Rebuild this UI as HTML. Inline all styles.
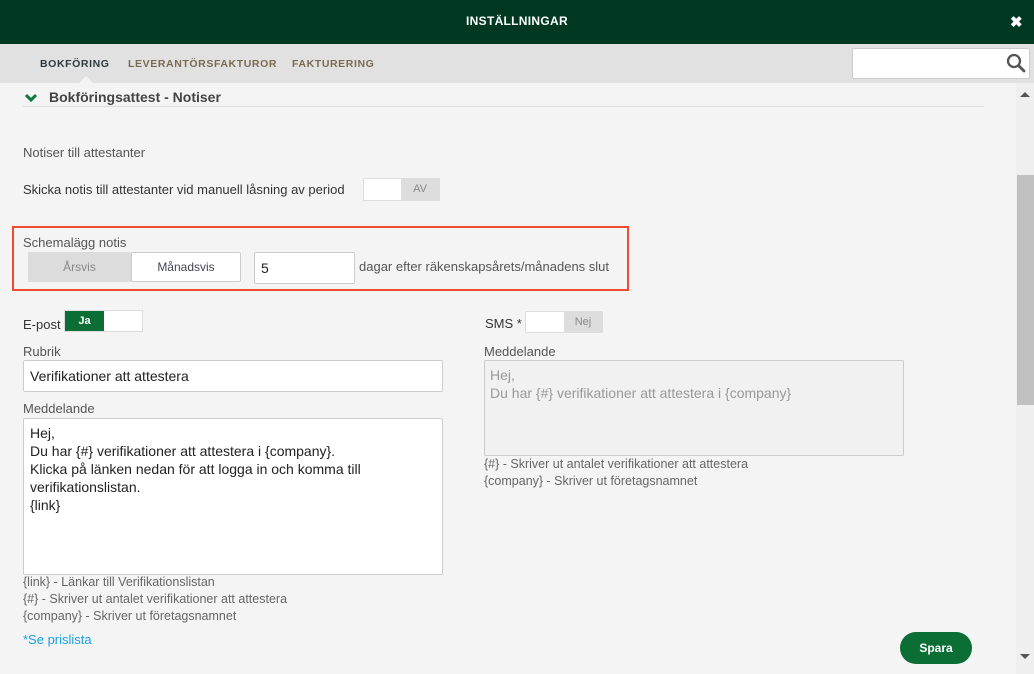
<!DOCTYPE html>
<html><head><meta charset="utf-8"><style>
*{box-sizing:border-box;margin:0;padding:0}
body{width:1034px;height:674px;overflow:hidden;background:#f4f4f4;font-family:"Liberation Sans",sans-serif;color:#333;position:relative;font-size:13px}
.a{position:absolute;white-space:nowrap}
.lbl{color:#555;font-size:13px}
.inp{position:absolute;background:#fff;border:1px solid #ccc;border-radius:2px}
.hint{color:#666;font-size:12.5px;line-height:17px}
</style></head><body>
<div class="a" style="left:0;top:0;width:1034px;height:44px;background:#003822"></div>
<div class="a" style="left:0;top:14px;width:1034px;text-align:center;color:#fff;font-weight:bold;font-size:12px;letter-spacing:.3px">INSTÄLLNINGAR</div>
<div class="a" style="left:1010px;top:13px;color:#fff;font-weight:bold;font-size:15px">✖</div>
<div class="a" style="left:0;top:44px;width:1034px;height:39px;background:#e1e1e1"></div>
<div class="a" style="left:40px;top:58px;font-size:10.5px;font-weight:bold;color:#2c3a40;letter-spacing:.6px">BOKFÖRING</div>
<div class="a" style="left:128px;top:58px;font-size:10.5px;font-weight:bold;color:#7a6a50;letter-spacing:.6px">LEVERANTÖRSFAKTUROR</div>
<div class="a" style="left:292px;top:58px;font-size:10.5px;font-weight:bold;color:#7a6a50;letter-spacing:.6px">FAKTURERING</div>
<div class="a" style="left:79px;top:76px;width:0;height:0;border-left:7px solid transparent;border-right:7px solid transparent;border-bottom:7px solid #f4f4f4"></div>
<div class="inp" style="left:852px;top:48px;width:178px;height:31px;border-radius:2px"></div>
<svg class="a" style="left:1006px;top:53px" width="20" height="20" viewBox="0 0 20 20"><circle cx="8" cy="8" r="6" fill="none" stroke="#555" stroke-width="2.3"/><line x1="12.5" y1="12.5" x2="18" y2="18" stroke="#555" stroke-width="2.8" stroke-linecap="round"/></svg>
<div class="a" style="left:1016px;top:83px;width:18px;height:591px;background:#efefef"></div>
<div class="a" style="left:1017px;top:175px;width:17px;height:230px;background:#c1c1c1"></div>
<div class="a" style="left:1020px;top:92px;border-left:5px solid transparent;border-right:5px solid transparent;border-bottom:5px solid #555"></div>
<div class="a" style="left:1020px;top:654px;border-left:5px solid transparent;border-right:5px solid transparent;border-top:5px solid #555"></div>
<svg class="a" style="left:24px;top:92px" width="14" height="12" viewBox="0 0 14 12"><path d="M2 3 L7 8 L12 3" fill="none" stroke="#0a7a3a" stroke-width="3"/></svg>
<div class="a" style="left:49px;top:89px;font-size:14px;font-weight:bold;color:#444">Bokföringsattest - Notiser</div>
<div class="a" style="left:23px;top:106px;width:961px;height:1px;background:#ddd"></div>
<div class="a lbl" style="left:23px;top:145px">Notiser till attestanter</div>
<div class="a" style="left:23px;top:182px;color:#333">Skicka notis till attestanter vid manuell låsning av period</div>
<div class="a" style="left:363px;top:178px;width:77px;height:23px;background:#ddd;border:1px solid #ddd"><div style="position:absolute;left:0;top:0;width:37px;height:21px;background:#fff"></div><div style="position:absolute;left:37px;top:4px;width:38px;text-align:center;font-size:11px;color:#888">AV</div></div>
<div class="a" style="left:12px;top:226px;width:617px;height:65px;border:2px solid #f04a30"></div>
<div class="a lbl" style="left:23px;top:235px">Schemalägg notis</div>
<div class="a" style="left:28px;top:252px;width:103px;height:30px;background:#dcdcdc;text-align:center;line-height:30px;font-size:12px;color:#888">Årsvis</div>
<div class="inp" style="left:131px;top:252px;width:110px;height:30px;text-align:center;line-height:28px;font-size:12px;color:#445">Månadsvis</div>
<div class="inp" style="left:254px;top:252px;width:101px;height:32px;line-height:30px;padding-left:6px;font-size:14px;color:#222">5</div>
<div class="a" style="left:359px;top:259px;color:#555">dagar efter räkenskapsårets/månadens slut</div>
<div class="a" style="left:23px;top:317px;color:#333">E-post</div>
<div class="a" style="left:64px;top:310px;width:79px;height:22px;background:#fff;border:1px solid #ddd"><div style="position:absolute;left:0;top:0;width:39px;height:20px;background:#0a6e35;color:#fff;font-weight:bold;font-size:11px;text-align:center;line-height:20px">Ja</div></div>
<div class="a" style="left:485px;top:316px;color:#333">SMS *</div>
<div class="a" style="left:525px;top:311px;width:78px;height:22px;background:#ddd;border:1px solid #ddd"><div style="position:absolute;left:0;top:0;width:38px;height:20px;background:#fff"></div><div style="position:absolute;left:38px;top:4px;width:38px;text-align:center;font-size:11px;color:#888">Nej</div></div>
<div class="a lbl" style="left:23px;top:344px">Rubrik</div>
<div class="inp" style="left:23px;top:360px;width:420px;height:32px;line-height:30px;padding-left:6px;font-size:14px;color:#222">Verifikationer att attestera</div>
<div class="a lbl" style="left:23px;top:401px">Meddelande</div>
<div class="inp" style="left:23px;top:418px;width:420px;height:157px;padding:5px 6px;font-size:14px;line-height:18px;color:#222;white-space:normal">Hej,<br>Du har {#} verifikationer att attestera i {company}.<br>Klicka på länken nedan för att logga in och komma till<br>verifikationslistan.<br>{link}</div>
<div class="a hint" style="left:23px;top:574px">{link} - Länkar till Verifikationslistan<br>{#} - Skriver ut antalet verifikationer att attestera<br>{company} - Skriver ut företagsnamnet</div>
<div class="a" style="left:23px;top:632px;color:#1a9fe0;font-size:13px">*Se prislista</div>
<div class="a lbl" style="left:484px;top:344px">Meddelande</div>
<div class="a" style="left:484px;top:360px;width:420px;height:96px;background:#f1f1f1;border:1px solid #ccc;border-radius:2px;padding:5px 5px;font-size:14px;line-height:18px;color:#999">Hej,<br>Du har {#} verifikationer att attestera i {company}</div>
<div class="a hint" style="left:484px;top:456px">{#} - Skriver ut antalet verifikationer att attestera<br>{company} - Skriver ut företagsnamnet</div>
<div class="a" style="left:900px;top:632px;width:72px;height:32px;border-radius:16px;background:#0a6e35;color:#fff;font-weight:bold;font-size:12px;text-align:center;line-height:32px">Spara</div>
</body></html>
